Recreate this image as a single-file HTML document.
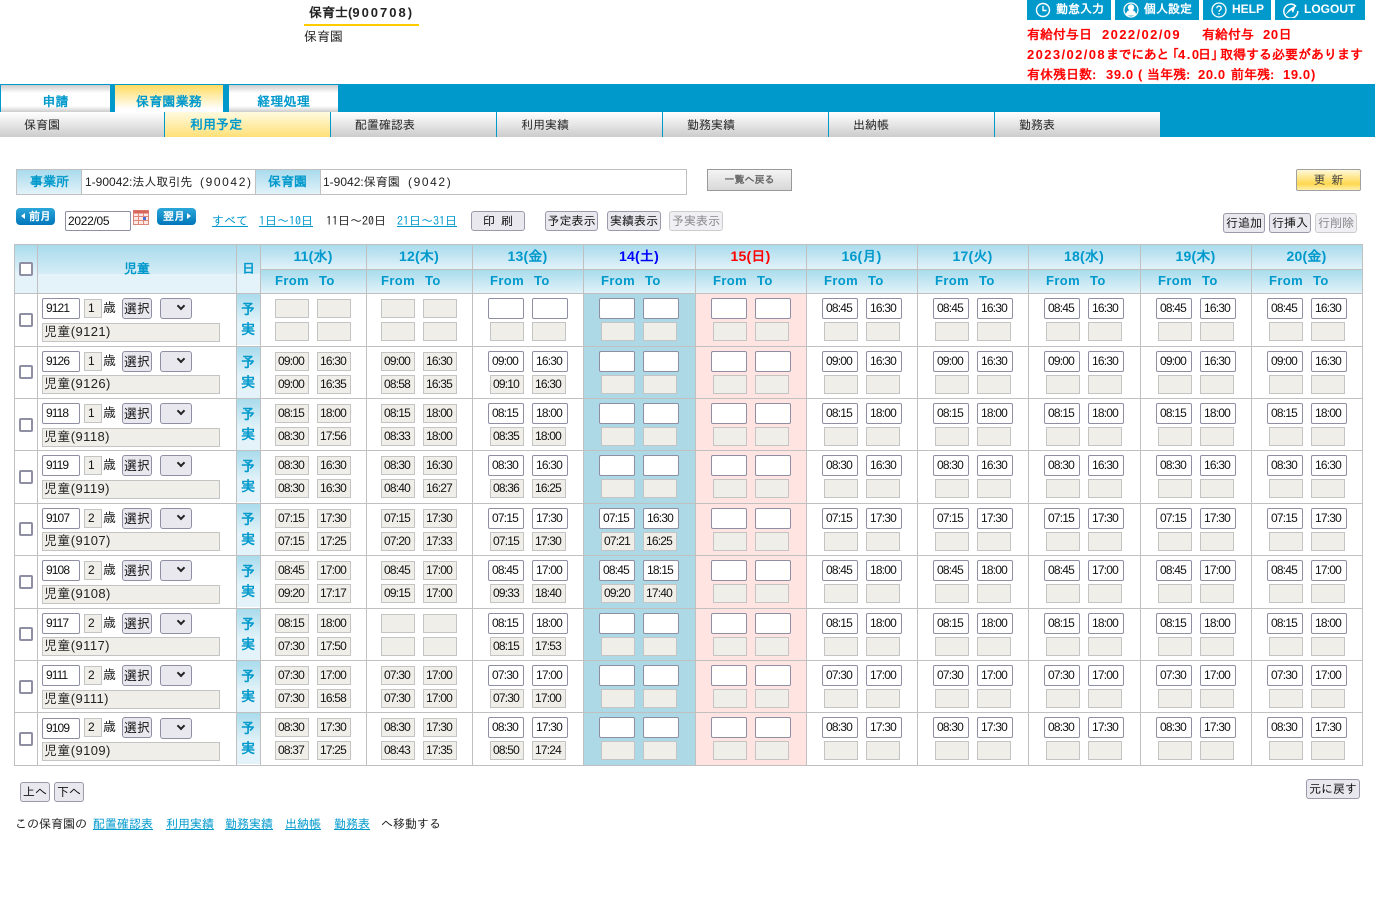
<!DOCTYPE html>
<html lang="ja"><head><meta charset="utf-8"><title>利用予定</title>
<style>
html,body{margin:0;padding:0;background:#fff}
body{position:relative;width:1376px;height:923px;overflow:hidden;font:12px/14px IPAGothic,"Noto Sans CJK JP",sans-serif;color:#222}
.a{position:absolute;white-space:nowrap}
.b{font-weight:bold}
.bl{color:#0099cc}
a{color:#0099cc;text-decoration:underline}
.tb{position:absolute;top:85px;height:27px;box-sizing:border-box;text-align:center;font:bold 13px/33px IPAGothic,sans-serif;color:#0099cc;background:linear-gradient(#ccc,#fff 8px,#fff 21px,#ccc);letter-spacing:.2px}
.sb{position:absolute;top:112px;height:25px;box-sizing:border-box;padding-left:24px;font:12px/26px IPAGothic,sans-serif;color:#222;background:linear-gradient(#fff,#ccc);border-right:1px solid #0099cc}
.tp{position:absolute;top:0;height:20px;background:#0099cc;color:#fff;font:bold 12px/18px "Liberation Sans",IPAGothic,sans-serif}
.tp svg{position:absolute;left:8px;top:2px}
.tp span{position:absolute;top:0;white-space:nowrap}
.red{position:absolute;left:1027px;color:#f00;font:bold 13px/16px "Liberation Sans",IPAGothic,sans-serif;white-space:nowrap}
.btn{position:absolute;box-sizing:border-box;height:20px;background:#e8e8ee;border:1px solid #9a9aaa;border-radius:3px;text-align:center;font:12px/18px IPAGothic,sans-serif;color:#111;white-space:nowrap}
.dis{color:#888;border-color:#ccc;background:#f0f0f4}
.hl{position:absolute;background:#c0c0c0}
.gr{position:absolute;background:linear-gradient(#a9dbec,#e2f2f9)}
.dh{position:absolute;top:249px;text-align:center;font:bold 14px/14px "Liberation Sans",IPAGothic,sans-serif;color:#0099cc;letter-spacing:.2px}
.ft{position:absolute;top:274px;font:bold 13px/14px "Liberation Sans",sans-serif;color:#0099cc;letter-spacing:.4px;white-space:nowrap}
.row{position:absolute;left:0;width:1376px;height:52px}
.row p{position:absolute;top:0;margin:0;width:100px;height:52px}
.row p:nth-of-type(1){left:260px}.row p:nth-of-type(2){left:366px}.row p:nth-of-type(3){left:472px}.row p:nth-of-type(4){left:583px}.row p:nth-of-type(5){left:695px}.row p:nth-of-type(6){left:806px}.row p:nth-of-type(7){left:917px}.row p:nth-of-type(8){left:1028px}.row p:nth-of-type(9){left:1140px}.row p:nth-of-type(10){left:1251px}
.row i{position:absolute;box-sizing:border-box;font-style:normal;padding-left:2px;font:12px "Liberation Sans",sans-serif;letter-spacing:-.8px;color:#111;white-space:nowrap}
.row i,.nm,.ag{background:#f0eee8;border:1px solid #c4c4c4}
.k i{width:34px;height:19px;line-height:17px}
.k i:nth-child(1){left:15px;top:6px}.k i:nth-child(2){left:57px;top:6px}.k i:nth-child(3){left:15px;top:29px}.k i:nth-child(4){left:57px;top:29px}
.m i{width:34px;height:19px;line-height:17px}
.m i:nth-child(1),.m i:nth-child(2){width:36px;height:21px;line-height:19px;top:5px;padding-left:3px;background:#fff;border:1px solid #8f8fa3;border-radius:2px}
.m i:nth-child(1){left:16px}.m i:nth-child(2){left:60px}
.m i:nth-child(3){left:18px;top:29px}.m i:nth-child(4){left:60px;top:29px}
.cb{position:absolute;left:19px;top:20px;width:14px;height:14px;box-sizing:border-box;border:2px solid #8f8fa3;border-radius:2px;background:#fff}
.id{position:absolute;left:42px;top:5px;width:38px;height:21px;box-sizing:border-box;border:1px solid #8f8fa3;border-radius:2px;padding-left:3px;font:12px/19px "Liberation Sans",sans-serif;letter-spacing:-.9px;color:#111;background:#fff}
.ag{position:absolute;left:84px;top:6px;width:18px;height:19px;box-sizing:border-box;padding-left:3px;font:12px/17px "Liberation Sans",sans-serif;color:#111}
.sa{position:absolute;left:103px;top:8px;font-size:13px}
.se{position:absolute;left:122px;top:5px;width:30px;height:21px;box-sizing:border-box;border:1px solid #8f8fa3;border-radius:3px;background:#e8e8ee;text-align:center;font-size:13px;line-height:19px;color:#111}
.sl{position:absolute;left:160px;top:5px;width:32px;height:21px;box-sizing:border-box;border:1px solid #8f8fa3;border-radius:3px;background:#e8e8ee}
.sl:after{content:"";position:absolute;left:17px;top:4px;width:4px;height:4px;border-right:2px solid #222;border-bottom:2px solid #222;transform:rotate(45deg)}
.nm{position:absolute;left:42px;top:30px;width:178px;height:19px;box-sizing:border-box;padding-left:1px;font:13px/15px "Liberation Sans",IPAGothic,sans-serif;letter-spacing:.4px;white-space:nowrap}
.yj{position:absolute;left:237px;top:1px;width:23px;height:51px;background:linear-gradient(#a9dbec,#e4f3f9 30px,#e4f3f9)}
.yj b{position:absolute;left:4px;font-size:14px;line-height:14px;color:#0099cc}
</style></head><body>

<div class="a b" style="left:309px;top:6px;font:bold 13px/14px 'Liberation Sans',IPAGothic,sans-serif">保育士(<span style="letter-spacing:2px">900708</span>)</div>
<div class="a" style="left:304px;top:24px;width:115px;height:2px;background:#fc0"></div>
<div class="a" style="left:304px;top:30px;font-size:13px">保育園</div>

<div class="tp" style="left:1027px;width:84px"><svg width="16" height="16" viewBox="0 0 16 16" fill="none" stroke="#fff" stroke-width="1.4"><circle cx="8" cy="8" r="6.5"/><path d="M8 4v4.5h3.5"/></svg><span style="left:29px;font-family:IPAGothic,sans-serif">勤怠入力</span></div>
<div class="tp" style="left:1115px;width:84px"><svg width="16" height="16" viewBox="0 0 16 16" fill="none" stroke="#fff" stroke-width="1.2"><circle cx="8" cy="8" r="7"/><circle cx="8" cy="5.5" r="2.6" fill="#fff"/><path d="M3.500 13c0-6 9-6 9 0z" fill="#fff"/></svg><span style="left:29px;font-family:IPAGothic,sans-serif">個人設定</span></div>
<div class="tp" style="left:1203px;width:68px"><svg width="16" height="16" viewBox="0 0 16 16" fill="none" stroke="#fff" stroke-width="1.3"><circle cx="8" cy="8" r="7"/><path d="M5.800 6.300c0-3 4.400-3 4.400 0 0 1.800-2.200 1.600-2.200 3.500M8 11v1.500"/></svg><span style="left:29px">HELP</span></div>
<div class="tp" style="left:1275px;width:90px"><svg width="16" height="16" viewBox="0 0 16 16" fill="none" stroke="#fff" stroke-width="1.500"><path d="M13 4.500A7 7 0 1 0 14.800 9"/><path d="M2 13 6 7.500 13 3 10 11 8.500 8z" fill="#fff" stroke="none"/></svg><span style="left:29px">LOGOUT</span></div>

<div class="red" style="top:27px">有給付与日</div>
<div class="red" style="top:27px;left:1102px;letter-spacing:1.4px">2022/02/09</div>
<div class="red" style="top:27px;left:1202px">有給付与</div>
<div class="red" style="top:27px;left:1263px;letter-spacing:.6px">20日</div>
<div class="red" style="top:47px;letter-spacing:1.4px">2023/02/08</div>
<div class="red" style="top:47px;left:1106px;letter-spacing:-.4px">までにあと</div>
<div class="red" style="top:47px;left:1166px">「</div>
<div class="red" style="top:47px;left:1178px;letter-spacing:1.500px">4.0</div>
<div class="red" style="top:47px;left:1198px">日</div>
<div class="red" style="top:47px;left:1211px">」</div>
<div class="red" style="top:47px;left:1220px">取得する必要があります</div>
<div class="red" style="top:67px">有休残日数:</div>
<div class="red" style="top:67px;left:1106px;letter-spacing:.6px">39.0</div>
<div class="red" style="top:67px;left:1138px">(</div>
<div class="red" style="top:67px;left:1147px">当年残:</div>
<div class="red" style="top:67px;left:1198px;letter-spacing:.6px">20.0</div>
<div class="red" style="top:67px;left:1231px">前年残:</div>
<div class="red" style="top:67px;left:1283px;letter-spacing:.6px">19.0</div>
<div class="red" style="top:67px;left:1311px">)</div>

<div class="a" style="left:0;top:84px;width:1375px;height:53px;background:#0099cc"></div>
<div class="tb" style="left:1px;width:109px">申請</div>
<div class="tb" style="left:115px;width:108px;background:linear-gradient(#ffdc60,#fff 24px)">保育園業務</div>
<div class="tb" style="left:229px;width:109px">経理処理</div>
<div class="sb" style="left:0;width:165px">保育園</div>
<div class="sb b bl" style="left:165px;width:166px;padding-left:25px;font-size:13px;font-weight:bold;color:#0099cc;background:linear-gradient(#fffbe0,#ffe078)">利用予定</div>
<div class="sb" style="left:331px;width:166px">配置確認表</div>
<div class="sb" style="left:497px;width:166px">利用実績</div>
<div class="sb" style="left:663px;width:166px">勤務実績</div>
<div class="sb" style="left:829px;width:166px">出納帳</div>
<div class="sb" style="left:995px;width:165px;border:0">勤務表</div>

<div class="a" style="left:16px;top:169px;width:671px;height:26px;box-sizing:border-box;border:1px solid #c0c0c0;background:#fff"></div>
<div class="gr" style="left:17px;top:170px;width:64px;height:24px;border-right:1px solid #c0c0c0"></div>
<div class="a b bl" style="left:30px;top:175px;font-size:13px">事業所</div>
<div class="a" style="left:85px;top:175px;font-family:'Liberation Sans',IPAGothic,sans-serif">1-90042:法人取引先</div>
<div class="a" style="left:200px;top:175px;font-family:'Liberation Sans',sans-serif;letter-spacing:1.6px">(90042)</div>
<div class="gr" style="left:255px;top:170px;width:64px;height:24px;border:solid #c0c0c0;border-width:0 1px"></div>
<div class="a b bl" style="left:268px;top:175px;font-size:13px">保育園</div>
<div class="a" style="left:323px;top:175px;font-family:'Liberation Sans',IPAGothic,sans-serif">1-9042:保育園</div>
<div class="a" style="left:408px;top:175px;font-family:'Liberation Sans',sans-serif;letter-spacing:1.6px">(9042)</div>

<div class="a" style="left:707px;top:169px;width:85px;height:22px;box-sizing:border-box;border:1px solid #999;background:linear-gradient(#f4f4f4,#d8d8d8);text-align:center;font:bold 10px/20px IPAGothic,sans-serif;color:#666">一覧へ戻る</div>
<div class="a" style="left:1296px;top:169px;width:65px;height:22px;box-sizing:border-box;border:1px solid #a0a0a0;border-radius:2px;background:linear-gradient(#fff8d8,#ffd850 70%,#fff0b0);text-align:center;font:12px/21px IPAGothic,sans-serif;color:#444">更 新</div>

<div class="a b" style="left:16px;top:208px;width:39px;height:17px;border-radius:4px;background:linear-gradient(#2ba6d8,#0077bb);color:#fff;font-size:11px;line-height:16px"><span class="a" style="left:5px;top:5px;border:solid transparent;border-width:3px 4px 3px 0;border-right-color:#fff"></span><span class="a" style="left:13px;top:1px">前月</span></div>
<div class="a" style="left:65px;top:211px;width:66px;height:20px;box-sizing:border-box;border:1px solid #8f8fa3;border-radius:2px;padding-left:2px;font:12px/18px 'Liberation Sans',sans-serif;letter-spacing:-.3px;color:#111">2022/05</div>
<svg class="a" style="left:133px;top:210px" width="16" height="15" viewBox="0 0 16 15"><rect x=".5" y=".5" width="15" height="14" fill="#fde8e4" stroke="#d9857a"/><rect x=".5" y=".5" width="15" height="3" fill="#d9655a"/><path d="M5.500 3v11M10.500 3v11M1 6.500h14M1 10.500h14" stroke="#e0877c"/><rect x="10" y="7" width="3" height="3" fill="#4a6ed8"/></svg>
<div class="a b" style="left:157px;top:208px;width:39px;height:17px;border-radius:4px;background:linear-gradient(#2ba6d8,#0077bb);color:#fff;font-size:11px;line-height:16px"><span class="a" style="left:6px;top:1px">翌月</span><span class="a" style="left:30px;top:5px;border:solid transparent;border-width:3px 0 3px 4px;border-left-color:#fff"></span></div>
<a class="a" style="left:212px;top:214px">すべて</a>
<a class="a" style="left:259px;top:214px">1日～10日</a>
<div class="a" style="left:326px;top:214px">11日～20日</div>
<a class="a" style="left:397px;top:214px">21日～31日</a>
<div class="btn" style="left:471px;top:211px;width:54px">印 刷</div>
<div class="btn" style="left:545px;top:211px;width:53px">予定表示</div>
<div class="btn" style="left:607px;top:211px;width:54px">実績表示</div>
<div class="btn dis" style="left:669px;top:211px;width:54px">予実表示</div>
<div class="btn" style="left:1223px;top:213px;width:42px">行追加</div>
<div class="btn" style="left:1269px;top:213px;width:42px">行挿入</div>
<div class="btn dis" style="left:1315px;top:213px;width:42px">行削除</div>

<div class="a" style="left:584px;top:294px;width:111px;height:471px;background:#add8e6"></div>
<div class="a" style="left:696px;top:294px;width:110px;height:471px;background:#ffe4e1"></div>

<div class="a" style="left:15px;top:245px;width:22px;height:48px;background:linear-gradient(#a9dbec,#e4f3f9 29px,#e4f3f9)"></div>
<div class="a" style="left:38px;top:245px;width:198px;height:48px;background:linear-gradient(#a9dbec,#d4ecf6 29px,#e4f3f9 29px,#e4f3f9)"></div>
<div class="a" style="left:237px;top:245px;width:23px;height:48px;background:linear-gradient(#a9dbec,#d4ecf6 29px,#e4f3f9 29px,#e4f3f9)"></div>
<div class="gr" style="left:261px;top:245px;width:1101px;height:24px"></div>
<div class="gr" style="left:261px;top:270px;width:1101px;height:23px"></div>
<div class="cb" style="top:262px;background:#fff"></div>
<div class="a b bl" style="left:124px;top:262px;font-size:13px">児童</div>
<div class="a b bl" style="left:242px;top:262px;font-size:13px">日</div>

<div class="dh" style="left:260px;width:106px">11(水)</div>
<div class="dh" style="left:366px;width:106px">12(木)</div>
<div class="dh" style="left:472px;width:111px">13(金)</div>
<div class="dh" style="left:583px;width:112px;color:#00f">14(土)</div>
<div class="dh" style="left:695px;width:111px;color:#f00">15(日)</div>
<div class="dh" style="left:806px;width:111px">16(月)</div>
<div class="dh" style="left:917px;width:111px">17(火)</div>
<div class="dh" style="left:1028px;width:112px">18(水)</div>
<div class="dh" style="left:1140px;width:111px">19(木)</div>
<div class="dh" style="left:1251px;width:111px">20(金)</div>

<div class="ft" style="left:275px">From</div><div class="ft" style="left:319px">To</div>
<div class="ft" style="left:381px">From</div><div class="ft" style="left:425px">To</div>
<div class="ft" style="left:490px">From</div><div class="ft" style="left:534px">To</div>
<div class="ft" style="left:601px">From</div><div class="ft" style="left:645px">To</div>
<div class="ft" style="left:713px">From</div><div class="ft" style="left:757px">To</div>
<div class="ft" style="left:824px">From</div><div class="ft" style="left:868px">To</div>
<div class="ft" style="left:935px">From</div><div class="ft" style="left:979px">To</div>
<div class="ft" style="left:1046px">From</div><div class="ft" style="left:1090px">To</div>
<div class="ft" style="left:1158px">From</div><div class="ft" style="left:1202px">To</div>
<div class="ft" style="left:1269px">From</div><div class="ft" style="left:1313px">To</div>

<div class="hl" style="left:14px;top:244px;width:1349px;height:1px"></div>
<div class="hl" style="left:260px;top:269px;width:1103px;height:1px"></div>
<div class="hl" style="left:14px;top:293px;width:1349px;height:1px"></div>
<div class="hl" style="left:14px;top:346px;width:1349px;height:1px"></div>
<div class="hl" style="left:14px;top:398px;width:1349px;height:1px"></div>
<div class="hl" style="left:14px;top:450px;width:1349px;height:1px"></div>
<div class="hl" style="left:14px;top:503px;width:1349px;height:1px"></div>
<div class="hl" style="left:14px;top:555px;width:1349px;height:1px"></div>
<div class="hl" style="left:14px;top:608px;width:1349px;height:1px"></div>
<div class="hl" style="left:14px;top:660px;width:1349px;height:1px"></div>
<div class="hl" style="left:14px;top:712px;width:1349px;height:1px"></div>
<div class="hl" style="left:14px;top:765px;width:1349px;height:1px"></div>
<div class="hl" style="left:14px;top:244px;width:1px;height:522px"></div>
<div class="hl" style="left:37px;top:244px;width:1px;height:522px"></div>
<div class="hl" style="left:236px;top:244px;width:1px;height:522px"></div>
<div class="hl" style="left:260px;top:244px;width:1px;height:522px"></div>
<div class="hl" style="left:366px;top:244px;width:1px;height:522px"></div>
<div class="hl" style="left:472px;top:244px;width:1px;height:522px"></div>
<div class="hl" style="left:583px;top:244px;width:1px;height:522px"></div>
<div class="hl" style="left:695px;top:244px;width:1px;height:522px"></div>
<div class="hl" style="left:806px;top:244px;width:1px;height:522px"></div>
<div class="hl" style="left:917px;top:244px;width:1px;height:522px"></div>
<div class="hl" style="left:1028px;top:244px;width:1px;height:522px"></div>
<div class="hl" style="left:1140px;top:244px;width:1px;height:522px"></div>
<div class="hl" style="left:1251px;top:244px;width:1px;height:522px"></div>
<div class="hl" style="left:1362px;top:244px;width:1px;height:522px"></div>

<div class="row" style="top:293px"><div class="cb"></div><div class="id">9121</div><div class="ag">1</div><div class="sa">歳</div><div class="se">選択</div><div class="sl"></div><div class="nm">児童(9121)</div><div class="yj"><b style="top:8px">予</b><b style="top:28px">実</b></div>
<p class="k"><i></i><i></i><i></i><i></i></p><p class="k"><i></i><i></i><i></i><i></i></p><p class="m"><i></i><i></i><i></i><i></i></p><p class="m"><i></i><i></i><i></i><i></i></p><p class="m"><i></i><i></i><i></i><i></i></p><p class="m"><i>08:45</i><i>16:30</i><i></i><i></i></p><p class="m"><i>08:45</i><i>16:30</i><i></i><i></i></p><p class="m"><i>08:45</i><i>16:30</i><i></i><i></i></p><p class="m"><i>08:45</i><i>16:30</i><i></i><i></i></p><p class="m"><i>08:45</i><i>16:30</i><i></i><i></i></p></div>

<div class="row" style="top:346px"><div class="cb" style="top:19px"></div><div class="id">9126</div><div class="ag">1</div><div class="sa">歳</div><div class="se">選択</div><div class="sl"></div><div class="nm" style="top:29px">児童(9126)</div><div class="yj"><b style="top:8px">予</b><b style="top:28px">実</b></div>
<p class="k"><i>09:00</i><i>16:30</i><i>09:00</i><i>16:35</i></p><p class="k"><i>09:00</i><i>16:30</i><i>08:58</i><i>16:35</i></p><p class="m"><i>09:00</i><i>16:30</i><i>09:10</i><i>16:30</i></p><p class="m"><i></i><i></i><i></i><i></i></p><p class="m"><i></i><i></i><i></i><i></i></p><p class="m"><i>09:00</i><i>16:30</i><i></i><i></i></p><p class="m"><i>09:00</i><i>16:30</i><i></i><i></i></p><p class="m"><i>09:00</i><i>16:30</i><i></i><i></i></p><p class="m"><i>09:00</i><i>16:30</i><i></i><i></i></p><p class="m"><i>09:00</i><i>16:30</i><i></i><i></i></p></div>

<div class="row" style="top:398px"><div class="cb"></div><div class="id">9118</div><div class="ag">1</div><div class="sa">歳</div><div class="se">選択</div><div class="sl"></div><div class="nm">児童(9118)</div><div class="yj"><b style="top:8px">予</b><b style="top:28px">実</b></div>
<p class="k"><i>08:15</i><i>18:00</i><i>08:30</i><i>17:56</i></p><p class="k"><i>08:15</i><i>18:00</i><i>08:33</i><i>18:00</i></p><p class="m"><i>08:15</i><i>18:00</i><i>08:35</i><i>18:00</i></p><p class="m"><i></i><i></i><i></i><i></i></p><p class="m"><i></i><i></i><i></i><i></i></p><p class="m"><i>08:15</i><i>18:00</i><i></i><i></i></p><p class="m"><i>08:15</i><i>18:00</i><i></i><i></i></p><p class="m"><i>08:15</i><i>18:00</i><i></i><i></i></p><p class="m"><i>08:15</i><i>18:00</i><i></i><i></i></p><p class="m"><i>08:15</i><i>18:00</i><i></i><i></i></p></div>

<div class="row" style="top:450px"><div class="cb"></div><div class="id">9119</div><div class="ag">1</div><div class="sa">歳</div><div class="se">選択</div><div class="sl"></div><div class="nm">児童(9119)</div><div class="yj"><b style="top:8px">予</b><b style="top:28px">実</b></div>
<p class="k"><i>08:30</i><i>16:30</i><i>08:30</i><i>16:30</i></p><p class="k"><i>08:30</i><i>16:30</i><i>08:40</i><i>16:27</i></p><p class="m"><i>08:30</i><i>16:30</i><i>08:36</i><i>16:25</i></p><p class="m"><i></i><i></i><i></i><i></i></p><p class="m"><i></i><i></i><i></i><i></i></p><p class="m"><i>08:30</i><i>16:30</i><i></i><i></i></p><p class="m"><i>08:30</i><i>16:30</i><i></i><i></i></p><p class="m"><i>08:30</i><i>16:30</i><i></i><i></i></p><p class="m"><i>08:30</i><i>16:30</i><i></i><i></i></p><p class="m"><i>08:30</i><i>16:30</i><i></i><i></i></p></div>

<div class="row" style="top:503px"><div class="cb" style="top:19px"></div><div class="id">9107</div><div class="ag">2</div><div class="sa">歳</div><div class="se">選択</div><div class="sl"></div><div class="nm" style="top:29px">児童(9107)</div><div class="yj"><b style="top:8px">予</b><b style="top:28px">実</b></div>
<p class="k"><i>07:15</i><i>17:30</i><i>07:15</i><i>17:25</i></p><p class="k"><i>07:15</i><i>17:30</i><i>07:20</i><i>17:33</i></p><p class="m"><i>07:15</i><i>17:30</i><i>07:15</i><i>17:30</i></p><p class="m"><i>07:15</i><i>16:30</i><i>07:21</i><i>16:25</i></p><p class="m"><i></i><i></i><i></i><i></i></p><p class="m"><i>07:15</i><i>17:30</i><i></i><i></i></p><p class="m"><i>07:15</i><i>17:30</i><i></i><i></i></p><p class="m"><i>07:15</i><i>17:30</i><i></i><i></i></p><p class="m"><i>07:15</i><i>17:30</i><i></i><i></i></p><p class="m"><i>07:15</i><i>17:30</i><i></i><i></i></p></div>

<div class="row" style="top:555px"><div class="cb"></div><div class="id">9108</div><div class="ag">2</div><div class="sa">歳</div><div class="se">選択</div><div class="sl"></div><div class="nm">児童(9108)</div><div class="yj"><b style="top:8px">予</b><b style="top:28px">実</b></div>
<p class="k"><i>08:45</i><i>17:00</i><i>09:20</i><i>17:17</i></p><p class="k"><i>08:45</i><i>17:00</i><i>09:15</i><i>17:00</i></p><p class="m"><i>08:45</i><i>17:00</i><i>09:33</i><i>18:40</i></p><p class="m"><i>08:45</i><i>18:15</i><i>09:20</i><i>17:40</i></p><p class="m"><i></i><i></i><i></i><i></i></p><p class="m"><i>08:45</i><i>18:00</i><i></i><i></i></p><p class="m"><i>08:45</i><i>18:00</i><i></i><i></i></p><p class="m"><i>08:45</i><i>17:00</i><i></i><i></i></p><p class="m"><i>08:45</i><i>17:00</i><i></i><i></i></p><p class="m"><i>08:45</i><i>17:00</i><i></i><i></i></p></div>

<div class="row" style="top:608px"><div class="cb" style="top:19px"></div><div class="id">9117</div><div class="ag">2</div><div class="sa">歳</div><div class="se">選択</div><div class="sl"></div><div class="nm" style="top:29px">児童(9117)</div><div class="yj"><b style="top:8px">予</b><b style="top:28px">実</b></div>
<p class="k"><i>08:15</i><i>18:00</i><i>07:30</i><i>17:50</i></p><p class="k"><i></i><i></i><i></i><i></i></p><p class="m"><i>08:15</i><i>18:00</i><i>08:15</i><i>17:53</i></p><p class="m"><i></i><i></i><i></i><i></i></p><p class="m"><i></i><i></i><i></i><i></i></p><p class="m"><i>08:15</i><i>18:00</i><i></i><i></i></p><p class="m"><i>08:15</i><i>18:00</i><i></i><i></i></p><p class="m"><i>08:15</i><i>18:00</i><i></i><i></i></p><p class="m"><i>08:15</i><i>18:00</i><i></i><i></i></p><p class="m"><i>08:15</i><i>18:00</i><i></i><i></i></p></div>

<div class="row" style="top:660px"><div class="cb"></div><div class="id">9111</div><div class="ag">2</div><div class="sa">歳</div><div class="se">選択</div><div class="sl"></div><div class="nm">児童(9111)</div><div class="yj"><b style="top:8px">予</b><b style="top:28px">実</b></div>
<p class="k"><i>07:30</i><i>17:00</i><i>07:30</i><i>16:58</i></p><p class="k"><i>07:30</i><i>17:00</i><i>07:30</i><i>17:00</i></p><p class="m"><i>07:30</i><i>17:00</i><i>07:30</i><i>17:00</i></p><p class="m"><i></i><i></i><i></i><i></i></p><p class="m"><i></i><i></i><i></i><i></i></p><p class="m"><i>07:30</i><i>17:00</i><i></i><i></i></p><p class="m"><i>07:30</i><i>17:00</i><i></i><i></i></p><p class="m"><i>07:30</i><i>17:00</i><i></i><i></i></p><p class="m"><i>07:30</i><i>17:00</i><i></i><i></i></p><p class="m"><i>07:30</i><i>17:00</i><i></i><i></i></p></div>

<div class="row" style="top:712px"><div class="cb"></div><div class="id" style="top:6px">9109</div><div class="ag">2</div><div class="sa">歳</div><div class="se">選択</div><div class="sl" style="top:6px"></div><div class="nm">児童(9109)</div><div class="yj"><b style="top:8px">予</b><b style="top:28px">実</b></div>
<p class="k"><i>08:30</i><i>17:30</i><i>08:37</i><i>17:25</i></p><p class="k"><i>08:30</i><i>17:30</i><i>08:43</i><i>17:35</i></p><p class="m"><i>08:30</i><i>17:30</i><i>08:50</i><i>17:24</i></p><p class="m"><i></i><i></i><i></i><i></i></p><p class="m"><i></i><i></i><i></i><i></i></p><p class="m"><i>08:30</i><i>17:30</i><i></i><i></i></p><p class="m"><i>08:30</i><i>17:30</i><i></i><i></i></p><p class="m"><i>08:30</i><i>17:30</i><i></i><i></i></p><p class="m"><i>08:30</i><i>17:30</i><i></i><i></i></p><p class="m"><i>08:30</i><i>17:30</i><i></i><i></i></p></div>

<div class="btn" style="left:20px;top:782px;width:30px">上へ</div>
<div class="btn" style="left:54px;top:782px;width:30px">下へ</div>
<div class="btn" style="left:1306px;top:779px;width:54px">元に戻す</div>

<div class="a" style="left:15px;top:817px">この保育園の</div>
<a class="a" style="left:93px;top:817px">配置確認表</a>
<a class="a" style="left:166px;top:817px">利用実績</a>
<a class="a" style="left:225px;top:817px">勤務実績</a>
<a class="a" style="left:285px;top:817px">出納帳</a>
<a class="a" style="left:334px;top:817px">勤務表</a>
<div class="a" style="left:381px;top:817px">へ移動する</div>
</body></html>
